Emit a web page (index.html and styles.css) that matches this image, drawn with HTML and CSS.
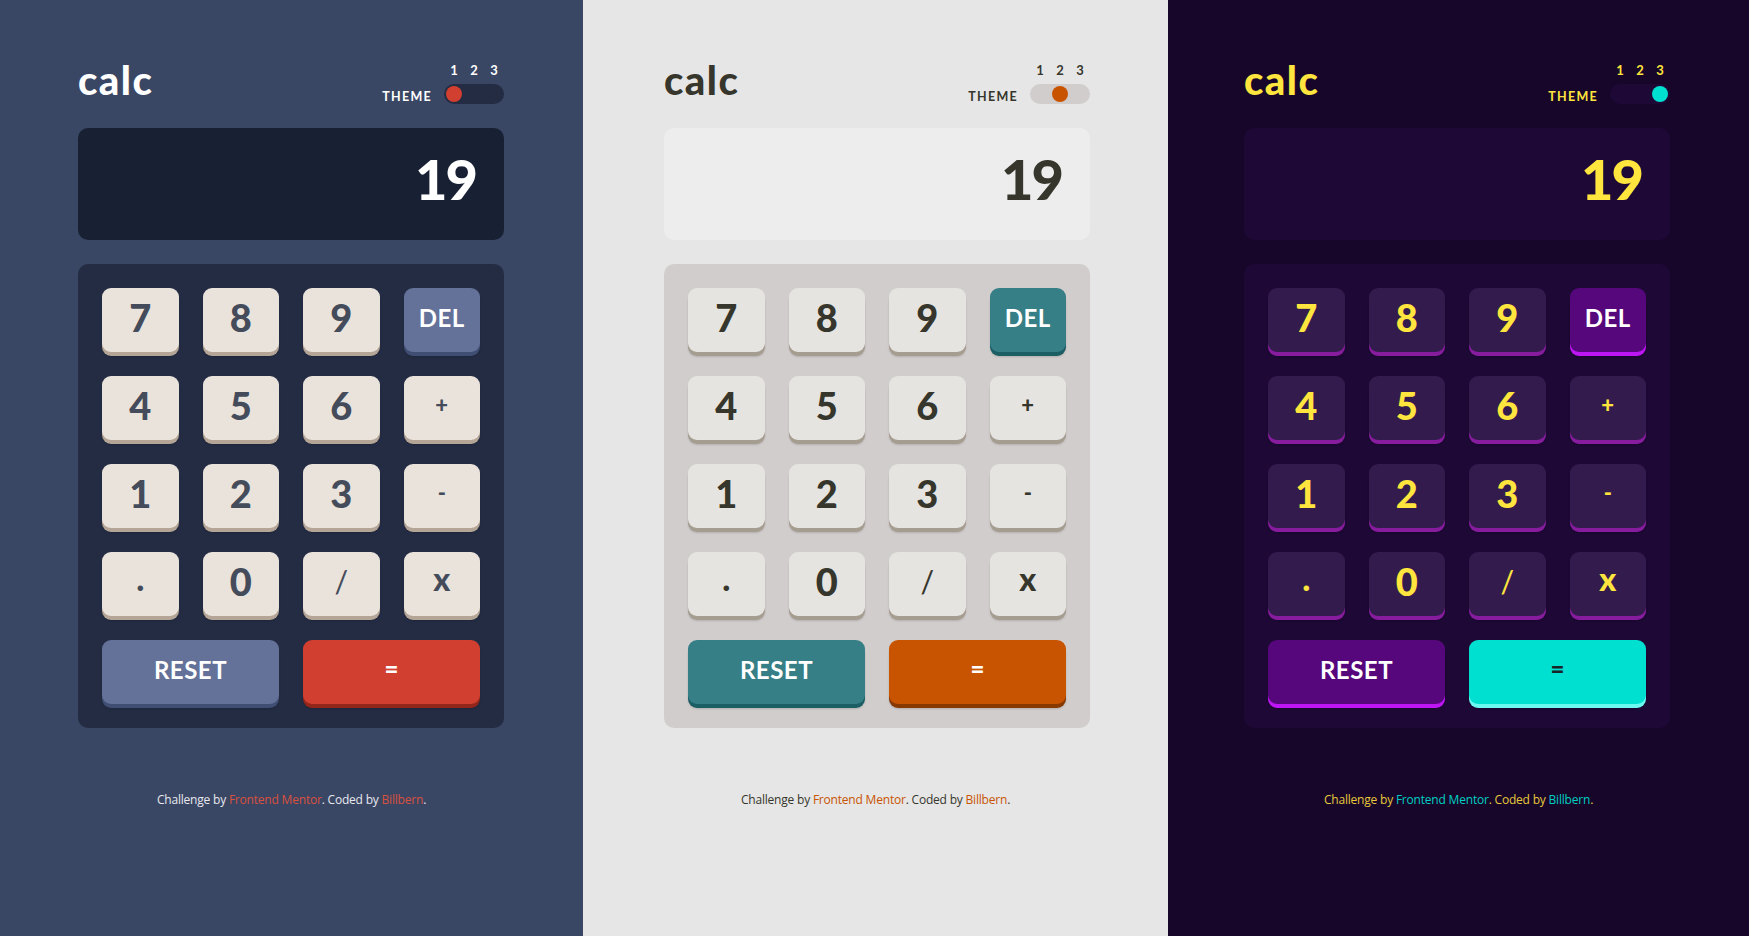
FILE: index.html
```html
<!DOCTYPE html>
<html lang="en">
<head>
<meta charset="utf-8">
<title>Calculator app – three themes</title>
<link rel="stylesheet" href="styles.css">
</head>
<body>
<div class="panels">
  <section class="panel t1">
    <main class="calc">
      <header class="head">
        <h1 class="logo">calc</h1>
        <div class="theme">
          <div class="nums"><span>1</span><span>2</span><span>3</span></div>
          <span class="label">THEME</span>
          <div class="toggle"><span class="knob"></span></div>
        </div>
      </header>
      <div class="screen">19</div>
      <div class="pad">
        <button class="key">7</button><button class="key">8</button><button class="key">9</button><button class="key alt del">DEL</button>
        <button class="key">4</button><button class="key">5</button><button class="key">6</button><button class="key op">+</button>
        <button class="key">1</button><button class="key">2</button><button class="key">3</button><button class="key op">-</button>
        <button class="key op dot">.</button><button class="key">0</button><button class="key op slash">/</button><button class="key op times">x</button>
        <button class="key alt wide">RESET</button><button class="key eq wide">=</button>
      </div>
    </main>
    <footer class="foot">Challenge by <a href="#">Frontend Mentor</a>. Coded by <a href="#">Billbern</a>.</footer>
  </section>

  <section class="panel t2">
    <main class="calc">
      <header class="head">
        <h1 class="logo">calc</h1>
        <div class="theme">
          <div class="nums"><span>1</span><span>2</span><span>3</span></div>
          <span class="label">THEME</span>
          <div class="toggle"><span class="knob"></span></div>
        </div>
      </header>
      <div class="screen">19</div>
      <div class="pad">
        <button class="key">7</button><button class="key">8</button><button class="key">9</button><button class="key alt del">DEL</button>
        <button class="key">4</button><button class="key">5</button><button class="key">6</button><button class="key op">+</button>
        <button class="key">1</button><button class="key">2</button><button class="key">3</button><button class="key op">-</button>
        <button class="key op dot">.</button><button class="key">0</button><button class="key op slash">/</button><button class="key op times">x</button>
        <button class="key alt wide">RESET</button><button class="key eq wide">=</button>
      </div>
    </main>
    <footer class="foot">Challenge by <a href="#">Frontend Mentor</a>. Coded by <a href="#">Billbern</a>.</footer>
  </section>

  <section class="panel t3">
    <main class="calc">
      <header class="head">
        <h1 class="logo">calc</h1>
        <div class="theme">
          <div class="nums"><span>1</span><span>2</span><span>3</span></div>
          <span class="label">THEME</span>
          <div class="toggle"><span class="knob"></span></div>
        </div>
      </header>
      <div class="screen">19</div>
      <div class="pad">
        <button class="key">7</button><button class="key">8</button><button class="key">9</button><button class="key alt del">DEL</button>
        <button class="key">4</button><button class="key">5</button><button class="key">6</button><button class="key op">+</button>
        <button class="key">1</button><button class="key">2</button><button class="key">3</button><button class="key op">-</button>
        <button class="key op dot">.</button><button class="key">0</button><button class="key op slash">/</button><button class="key op times">x</button>
        <button class="key alt wide">RESET</button><button class="key eq wide">=</button>
      </div>
    </main>
    <footer class="foot">Challenge by <a href="#">Frontend Mentor</a>. Coded by <a href="#">Billbern</a>.</footer>
  </section>
</div>
</body>
</html>
```
FILE: styles.css
```css
* { box-sizing: border-box; }

html, body {
  margin: 0;
  padding: 0;
  height: 936px;
  overflow: hidden;
}

body {
  font-family: "Lato", "Noto Sans", sans-serif;
  font-weight: 700;
}

.panels {
  display: grid;
  grid-template-columns: 583px 585px 581px;
  height: 936px;
}

.panel {
  background: var(--bg);
  color: var(--text);
  padding-top: 60px;
  display: flex;
  flex-direction: column;
}

/* ---------- themes ---------- */
.t1 {
  --bg: #3a4764;
  --text: #ffffff;
  --screen: #182034;
  --pad: #232c43;
  --toggle: #232c43;
  --knob: #d03f2f;
  --key: #eae3dc;
  --key-sh: #b4a597;
  --key-tx: #444b5a;
  --alt: #647198;
  --alt-sh: #414e73;
  --alt-tx: #ffffff;
  --eq: #d03f2f;
  --eq-sh: #93261a;
  --eq-tx: #ffffff;
  --foot: #e8e8ee;
  --link: #d8503f;
  --ml: 78px;
  --knob-pos: flex-start;
}

.t2 {
  --bg: #e6e6e6;
  --text: #36362c;
  --screen: #ededed;
  --pad: #d2cdcd;
  --toggle: #d2cdcd;
  --knob: #c85402;
  --key: #e5e4e1;
  --key-sh: #a69d91;
  --key-tx: #36362c;
  --alt: #377f86;
  --alt-sh: #1b5f65;
  --alt-tx: #ffffff;
  --eq: #c85402;
  --eq-sh: #873901;
  --eq-tx: #ffffff;
  --foot: #36362c;
  --link: #c85402;
  --ml: 81px;
  --knob-pos: center;
}

.t3 {
  --bg: #17062a;
  --text: #ffe53d;
  --screen: #1e0836;
  --pad: #1e0836;
  --toggle: #1e0836;
  --knob: #00e0d1;
  --key: #331c4d;
  --key-sh: #881c9e;
  --key-tx: #ffe53d;
  --alt: #56077c;
  --alt-sh: #be15f4;
  --alt-tx: #ffffff;
  --eq: #00e0d1;
  --eq-sh: #6cf9f2;
  --eq-tx: #1a2327;
  --foot: #e6c83a;
  --link: #00d0c3;
  --ml: 76px;
  --knob-pos: flex-end;
}

/* ---------- calculator ---------- */
.calc {
  width: 426px;
  margin-left: var(--ml);
}

.head {
  display: flex;
  justify-content: space-between;
  align-items: flex-end;
  margin-bottom: 24px;
}

.logo {
  margin: 0 0 4px 0;
  font-size: 40px;
  line-height: 40px;
  font-weight: 900;
  letter-spacing: 1.5px;
}

.theme {
  display: grid;
  grid-template-columns: auto 60px;
  column-gap: 12px;
  row-gap: 8px;
}

.nums {
  grid-column: 2;
  display: grid;
  grid-template-columns: repeat(3, 1fr);
  text-align: center;
  font-size: 13px;
  line-height: 12px;
}

.label {
  grid-column: 1;
  font-size: 12.5px;
  line-height: 12px;
  letter-spacing: 1.3px;
  align-self: center;
  padding-top: 5px;
}

.toggle {
  grid-column: 2;
  height: 20px;
  border-radius: 10px;
  background: var(--toggle);
  padding: 2px;
  display: flex;
  justify-content: var(--knob-pos);
  align-items: center;
}

.knob {
  width: 16px;
  height: 16px;
  border-radius: 50%;
  background: var(--knob);
}

.screen {
  height: 112px;
  border-radius: 10px;
  background: var(--screen);
  display: flex;
  align-items: center;
  justify-content: flex-end;
  padding: 0 28px 11px 0;
  font-size: 56px;
  font-weight: 900;
  line-height: 1;
  color: var(--text);
  letter-spacing: -2px;
  margin-bottom: 24px;
}

.pad {
  background: var(--pad);
  border-radius: 10px;
  padding: 24px;
  display: grid;
  grid-template-columns: repeat(4, 1fr);
  grid-auto-rows: 64px;
  gap: 24px;
}

.key {
  border: 0;
  margin: 0;
  font-family: inherit;
  font-weight: 900;
  font-size: 38px;
  line-height: 1;
  padding: 0 0 7px 0;
  border-radius: 9px;
  background: var(--key);
  color: var(--key-tx);
  box-shadow: 0 4px 0 var(--key-sh), 0 5px 2px rgba(0, 0, 0, 0.15);
  display: flex;
  align-items: center;
  justify-content: center;
}

.op { font-size: 22px; padding-bottom: 6px; }
.times { font-size: 32px; padding-bottom: 10px; }
.slash { font-size: 30px; font-weight: 400; padding-bottom: 6px; }
.dot { font-size: 34px; padding-bottom: 12px; }

.alt {
  background: var(--alt);
  color: var(--alt-tx);
  box-shadow: 0 4px 0 var(--alt-sh), 0 5px 2px rgba(0, 0, 0, 0.15);
  font-size: 24px;
  font-weight: 700;
  padding-bottom: 5px;
  letter-spacing: 0.5px;
}

.eq {
  background: var(--eq);
  color: var(--eq-tx);
  box-shadow: 0 4px 0 var(--eq-sh), 0 5px 2px rgba(0, 0, 0, 0.15);
  font-size: 24px;
  padding-bottom: 6px;
}

.wide { grid-column: span 2; }

/* ---------- footer ---------- */
.foot {
  margin-top: 63px;
  text-align: center;
  font-family: "Open Sans", "Noto Sans", sans-serif;
  font-weight: 400;
  font-size: 12px;
  line-height: 18px;
  letter-spacing: -0.2px;
  color: var(--foot);
}

.foot a {
  color: var(--link);
  text-decoration: none;
}
```
